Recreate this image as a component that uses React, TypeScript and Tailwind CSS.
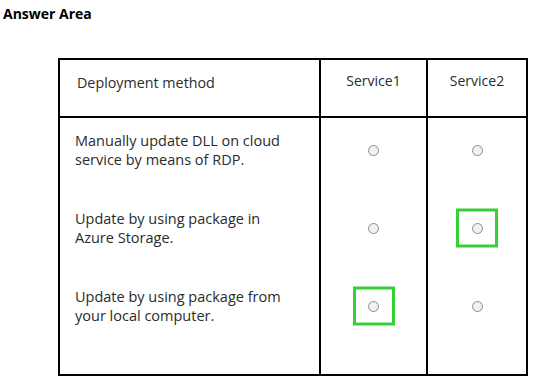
const rows = [
  { text: ["Manually update DLL on cloud", "service by means of RDP."], pick: 0 },
  { text: ["Update by using package in", "Azure Storage."], pick: 2 },
  { text: ["Update by using package from", "your local computer."], pick: 1 },
];

const Radio = ({ picked }: { picked: boolean }) => (
  <div className="relative flex h-[38px] items-center justify-center">
    <span className="block h-[11px] w-[11px] rounded-full border border-[#8c8c8c] bg-[#eef2f6]" />
    {picked && (
      <span className="absolute left-1/2 top-1/2 h-[39px] w-[42px] -translate-x-1/2 -translate-y-1/2 border-[3px] border-[#36cf36]" />
    )}
  </div>
);

const App = () => {
  return (
    <div className="h-[384px] w-[533px] bg-white text-[#2b2b2b]" style={{ fontFamily: '"Open Sans", sans-serif' }}>
      <div className="pl-[3px] pt-[5px] text-[14px] font-bold leading-[17px] text-black">Answer Area</div>
      <div className="ml-[58px] mt-[36px] w-[470px] border-2 border-black">
        <div className="grid h-[58px] grid-cols-[261px_107px_1fr] border-b-2 border-black">
          <div className="border-r-2 border-black pl-[17px] pt-[12px] text-[14.3px]">Deployment method</div>
          <div className="border-r-2 border-black pt-[10px] text-center text-[14px]">Service1</div>
          <div className="pt-[10px] text-center text-[14px]">Service2</div>
        </div>
        <div className="grid h-[256px] grid-cols-[261px_107px_1fr]">
          <div className="flex flex-col gap-[40px] border-r-2 border-black pl-[15px] pt-[13px] text-[14.5px] leading-[19px]">
            {rows.map((r) => (
              <div key={r.text[0]} className="flex h-[38px] flex-col justify-center whitespace-nowrap">
                <span>{r.text[0]}</span>
                <span>{r.text[1]}</span>
              </div>
            ))}
          </div>
          <div className="flex flex-col gap-[40px] border-r-2 border-black pt-[13px]">
            {rows.map((r) => (
              <Radio key={r.text[0]} picked={r.pick === 1} />
            ))}
          </div>
          <div className="flex flex-col gap-[40px] pt-[13px]">
            {rows.map((r) => (
              <Radio key={r.text[0]} picked={r.pick === 2} />
            ))}
          </div>
        </div>
      </div>
    </div>
  );
};

export default App;
